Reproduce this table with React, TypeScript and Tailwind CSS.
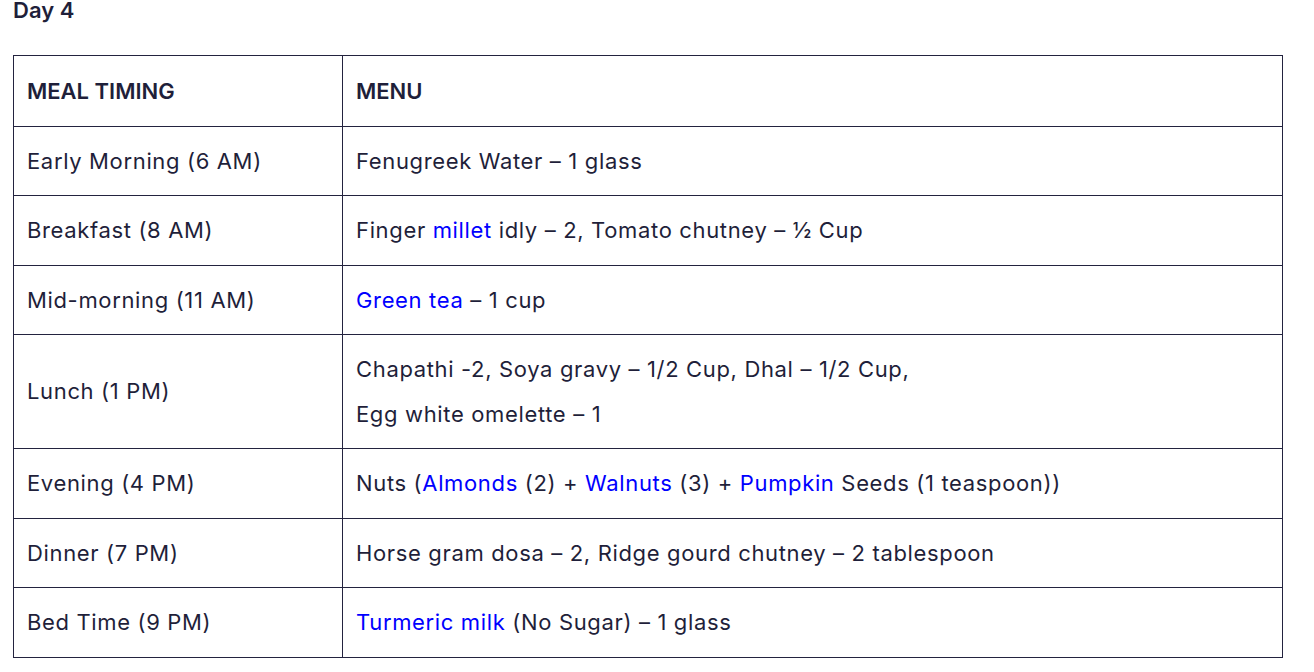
import React from 'react'

type Part = string | { link: string }

const rows: { time: string; menu: Part[][] }[] = [
  { time: 'Early Morning (6 AM)', menu: [['Fenugreek Water – 1 glass']] },
  { time: 'Breakfast (8 AM)', menu: [['Finger ', { link: 'millet' }, ' idly – 2, Tomato chutney – ½ Cup']] },
  { time: 'Mid-morning (11 AM)', menu: [[{ link: 'Green tea' }, ' – 1 cup']] },
  {
    time: 'Lunch (1 PM)',
    menu: [['Chapathi -2, Soya gravy – 1/2 Cup, Dhal – 1/2 Cup,'], ['Egg white omelette – 1']],
  },
  {
    time: 'Evening (4 PM)',
    menu: [[
      'Nuts (',
      { link: 'Almonds' },
      ' (2) + ',
      { link: 'Walnuts' },
      ' (3) + ',
      { link: 'Pumpkin' },
      ' Seeds (1 teaspoon))',
    ]],
  },
  { time: 'Dinner (7 PM)', menu: [['Horse gram dosa – 2, Ridge gourd chutney – 2 tablespoon']] },
  { time: 'Bed Time (9 PM)', menu: [[{ link: 'Turmeric milk' }, ' (No Sugar) – 1 glass']] },
]

const cell = 'border border-[#23233f] px-[13px] text-left'

export default function App() {
  return (
    <div className="h-[672px] overflow-hidden bg-white pl-[13px] pr-[31px] font-['Inter',sans-serif] text-[22px] text-[#1f1f3a]">
      <h3 className="-mt-[6px] text-[22px] leading-[32px] font-semibold">Day 4</h3>

      <table className="mt-[29px] w-full border-collapse border border-[#23233f] leading-[44.5px]">
        <thead>
          <tr>
            <th className={`${cell} w-[329px] py-[12.5px] font-semibold`}>MEAL TIMING</th>
            <th className={`${cell} py-[12.5px] font-semibold`}>MENU</th>
          </tr>
        </thead>
        <tbody className="tracking-[0.65px]">
          {rows.map((r) => (
            <tr key={r.time}>
              <td className={`${cell} py-[12px]`}>{r.time}</td>
              <td className={`${cell} py-[12px]`}>
                {r.menu.map((line, i) => (
                  <div key={i}>
                    {line.map((p, j) =>
                      typeof p === 'string' ? (
                        <span key={j}>{p}</span>
                      ) : (
                        <a key={j} href="#" className="text-[#0000ff]">
                          {p.link}
                        </a>
                      ),
                    )}
                  </div>
                ))}
              </td>
            </tr>
          ))}
        </tbody>
      </table>

      <h3 className="mt-[12px] text-[22px] leading-[32px] font-semibold">Day 5</h3>
    </div>
  )
}
